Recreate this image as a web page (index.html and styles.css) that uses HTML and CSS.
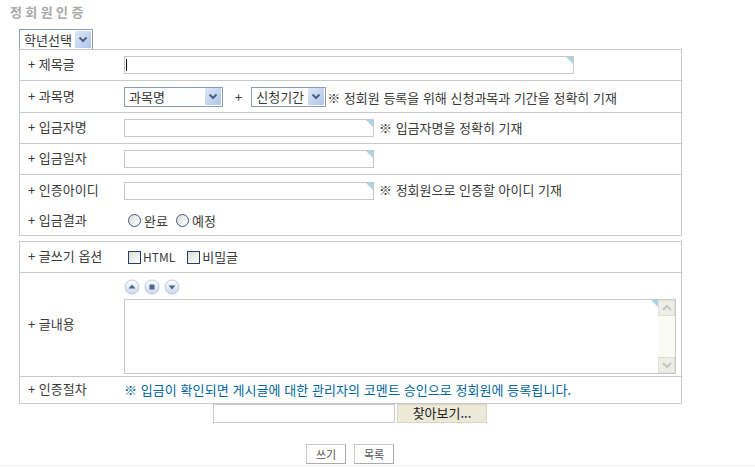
FILE: index.html
```html
<!DOCTYPE html>
<html lang="ko">
<head>
<meta charset="utf-8">
<title>정회원인증</title>
<link rel="stylesheet" href="styles.css">
</head>
<body>
<svg class="defs" width="0" height="0" aria-hidden="true">
  <defs>
    <linearGradient id="arrowBg" x1="0" y1="0" x2="1" y2="1">
      <stop offset="0" stop-color="#dfe8f8"/><stop offset="1" stop-color="#aec4ea"/>
    </linearGradient>
    <linearGradient id="orbBg" x1="0" y1="0" x2="0" y2="1">
      <stop offset="0" stop-color="#ffffff"/><stop offset="1" stop-color="#cdd6ec"/>
    </linearGradient>
    <symbol id="dropArrow" viewBox="0 0 16 17">
      <rect width="16" height="17" rx="1" fill="url(#arrowBg)"/>
      <path d="M4.5 6.5 8 10l3.5-3.5" fill="none" stroke="#4d6185" stroke-width="2"/>
    </symbol>
  </defs>
</svg>
<main class="page">
  <h1 class="title">정회원인증</h1>
  <div class="select grade"><span class="select-text">학년선택</span><svg class="arrow"><use href="#dropArrow"/></svg></div>

  <section class="box">
    <div class="row r31"><div class="label">+ 제목글</div><div class="field"><div class="input wide"><i class="caret"></i></div></div></div>
    <div class="row r32"><div class="label">+ 과목명</div>
      <div class="field">
        <div class="select subject"><span class="select-text">과목명</span><svg class="arrow"><use href="#dropArrow"/></svg></div>
        <span class="plus">+</span>
        <div class="select period"><span class="select-text">신청기간</span><svg class="arrow"><use href="#dropArrow"/></svg></div>
        <span class="note tight">※ 정회원 등록을 위해 신청과목과 기간을 정확히 기재</span>
      </div></div>
    <div class="row r31"><div class="label">+ 입금자명</div><div class="field"><div class="input mid"></div><span class="note">※ 입금자명을 정확히 기재</span></div></div>
    <div class="row r31"><div class="label">+ 입금일자</div><div class="field"><div class="input mid"></div></div></div>
    <div class="row r31 open"><div class="label">+ 인증아이디</div><div class="field"><div class="input mid"></div><span class="note lifted">※ 정회원으로 인증할 아이디 기재</span></div></div>
    <div class="row r29 open"><div class="label">+ 입금결과</div>
      <div class="field choices radios">
        <span class="choice"><i class="radio"></i>완료</span>
        <span class="choice"><i class="radio"></i>예정</span>
      </div></div>
  </section>

  <section class="box second">
    <div class="row r31"><div class="label">+ 글쓰기 옵션</div>
      <div class="field choices checks">
        <span class="choice"><i class="check"></i><span class="latin">HTML</span></span>
        <span class="choice"><i class="check"></i>비밀글</span>
      </div></div>
    <div class="row content"><div class="label">+ 글내용</div>
      <div class="editor">
        <div class="orbs">
          <svg class="orb" viewBox="0 0 16 16"><circle cx="8" cy="8" r="7" fill="url(#orbBg)" stroke="#bcc7df"/><path d="M4.5 9.5 8 5.5l3.5 4z" fill="#4f6692"/></svg>
          <svg class="orb" viewBox="0 0 16 16"><circle cx="8" cy="8" r="7" fill="url(#orbBg)" stroke="#bcc7df"/><rect x="5.5" y="5.5" width="5" height="5" fill="#4f6692"/></svg>
          <svg class="orb" viewBox="0 0 16 16"><circle cx="8" cy="8" r="7" fill="url(#orbBg)" stroke="#bcc7df"/><path d="M4.5 6.5h7L8 10.5z" fill="#4f6692"/></svg>
        </div>
        <div class="textarea">
          <div class="scrollbar">
            <div class="sb-btn"><svg viewBox="0 0 10 8" width="10" height="8"><path d="M1 6l4-4 4 4" fill="none" stroke="#c4c6bf" stroke-width="2"/></svg></div>
            <div class="sb-btn"><svg viewBox="0 0 10 8" width="10" height="8"><path d="M1 2l4 4 4-4" fill="none" stroke="#c4c6bf" stroke-width="2"/></svg></div>
          </div>
        </div>
      </div></div>
    <div class="row last"><div class="label">+ 인증절차</div><div class="field notice">※ 입금이 확인되면 게시글에 대한 관리자의 코멘트 승인으로 정회원에 등록됩니다.</div></div>
  </section>

  <div class="file-row"><div class="file-input"></div><div class="file-btn">찾아보기...</div></div>
  <div class="actions"><span class="btn">쓰기</span><span class="btn">목록</span></div>
</main>
<div class="footer-line"></div>
</body>
</html>
```
FILE: styles.css
```css
* { box-sizing: border-box; }
html, body { margin: 0; padding: 0; height: 467px; overflow: hidden; background: #fff; }
body {
  font-family: "Noto Sans CJK KR", "Liberation Sans", sans-serif;
  font-size: 13px;
  font-weight: 400;
  line-height: 16px;
  color: #3a3a3a;
  position: relative;
}
.defs { position: absolute; }
.page { padding: 3px 0 0 19px; width: 664px; }
.title { margin: 0 0 0 -9px; height: 26px; font-size: 13px; font-weight: 700; line-height: 17px; color: #a9a9a9; letter-spacing: 3.4px; }

.select {
  display: flex; align-items: center; justify-content: space-between;
  height: 20px; border: 1px solid #8a9bb5; background: #fff; padding: 0 1px 0 4px; flex: none;
}
.select-text { white-space: nowrap; }
.arrow { width: 16px; height: 17px; display: block; flex: none; }
.grade { width: 74px; border-bottom: 0; }
.subject { width: 99px; }
.period { width: 75px; }

.box { width: 663px; border: 1px solid #c8c8c8; }
.second { margin-top: 5px; }
.row { display: flex; align-items: center; border-bottom: 1px solid #c8c8c8; }
.row.open, .row.last { border-bottom: 0; }
.r31 { height: 31px; }
.r32 { height: 32px; }
.r29 { height: 29px; }
.label { width: 104px; padding-left: 8px; flex: none; white-space: nowrap; padding-bottom: 2px; }
.field { display: flex; align-items: center; flex: 1; min-width: 0; white-space: nowrap; }

.input { position: relative; height: 18px; border: 1px solid #c8c8c8; background: #fff; flex: none; }
.input::after, .textarea::after {
  content: ""; position: absolute; top: 0; right: 0; width: 0; height: 0;
  border-top: 7px solid #a9d3e6; border-left: 7px solid transparent;
}
.wide { width: 450px; }
.mid { width: 250px; }
.caret { position: absolute; left: 1px; top: 2px; width: 1px; height: 12px; background: #000; }
.plus { margin: 0 9px 0 12px; }
.note { margin-left: 5px; }
.note.tight { margin: 3px 0 0 1px; }
.note.lifted { margin-bottom: 2px; }

.choices { padding-left: 4px; }
.radios { gap: 8px; }
.checks { gap: 12px; }
.choice { display: flex; align-items: center; gap: 3px; }
.checks .choice { gap: 2px; }
.latin { font-size: 12px; }
.radio { width: 13px; height: 13px; border-radius: 50%; border: 1px solid #3f5a84; background: linear-gradient(135deg, #dcdcd4, #fff); }
.check { width: 13px; height: 13px; border: 1px solid #1f3f6f; background: linear-gradient(135deg, #dcdcd4, #fff); }

.content { height: 104px; }
.editor { flex: 1; }
.orbs { display: flex; gap: 4px; height: 24px; padding: 4px 0 0 0; }
.orb { width: 16px; height: 16px; display: block; }
.textarea { position: relative; width: 552px; height: 75px; border: 1px solid #c8c8c8; background: #fff; }
.textarea::after { right: 17px; }
.scrollbar {
  position: absolute; top: 0; right: 0; bottom: 0; width: 17px; background: #fbfbf5;
  display: flex; flex-direction: column; justify-content: space-between;
}
.sb-btn { height: 16px; background: #eeeee6; border: 1px solid #dfdfd6; display: flex; align-items: center; justify-content: center; }

.last { height: 26px; }
.notice { color: #00659c; letter-spacing: 0.07px; padding-bottom: 1px; }

.file-row { display: flex; justify-content: flex-start; padding-left: 194px; height: 19px; }
.file-input { width: 182px; height: 19px; border: 1px solid #c8c8c8; background: #fff; }
.file-btn { width: 90px; height: 19px; margin-left: 2px; background: #ece9d8; border: 1px solid #d8d5c4; text-align: center; line-height: 15px; color: #222; }

.actions { display: flex; justify-content: flex-start; gap: 8px; padding-left: 287px; margin-top: 21px; }
.btn { width: 40px; height: 20px; border: 1px solid #c8c8c8; border-right-color: #aaa; border-bottom-color: #aaa; text-align: center; line-height: 18px; font-size: 11px; color: #555; }
.footer-line { position: absolute; left: 0; right: 0; bottom: 1px; height: 1px; background: #f1f0e6; }
```
